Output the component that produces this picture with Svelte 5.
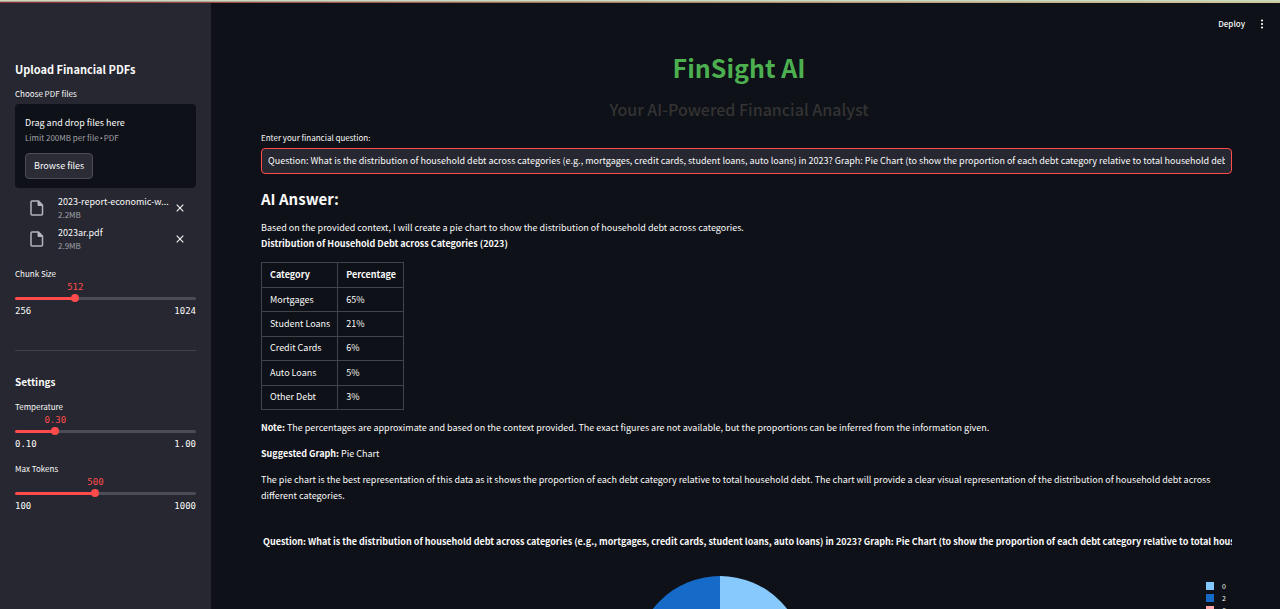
<script>
  const question =
    'Question: What is the distribution of household debt across categories (e.g., mortgages, credit cards, student loans, auto loans) in 2023? Graph: Pie Chart (to show the proportion of each debt category relative to total household debt)';

  const files = [
    { name: '2023-report-economic-w...', size: '2.2MB' },
    { name: '2023ar.pdf', size: '2.9MB' },
  ];

  const rows = [
    ['Mortgages', '65%'],
    ['Student Loans', '21%'],
    ['Credit Cards', '6%'],
    ['Auto Loans', '5%'],
    ['Other Debt', '3%'],
  ];

  const legend = [
    { label: '0', color: '#83c9ff' },
    { label: '2', color: '#166bc8' },
    { label: '6', color: '#ffabab' },
  ];

  let query = $state(question);
  let chunk = $state(512);
  let temperature = $state(0.3);
  let tokens = $state(500);
</script>

{#snippet scale(min, max, value, digits)}
  <span class="rail" style="--fill: {((value - min) / (max - min)) * 100}%">
    <output class="value">{value.toFixed(digits)}</output>
  </span>
{/snippet}

<div class="page">
  <div class="strip"></div>
  <div class="app">
    <aside>
      <h2 class="side-title">Upload Financial PDFs</h2>
      <label class="label" for="pdfs">Choose PDF files</label>
      <section class="drop">
        <div class="drop-title">Drag and drop files here</div>
        <div class="small">Limit 200MB per file<span class="bullet">•</span>PDF</div>
        <button id="pdfs" class="browse" type="button">Browse files</button>
      </section>
      <ul class="files">
        {#each files as file}
          <li>
            <svg class="doc" viewBox="0 0 14 16" aria-hidden="true">
              <path d="M2 1h6.500l4 4v9a1 1 0 0 1-1 1H2a1 1 0 0 1-1-1V2a1 1 0 0 1 1-1z" fill="none" stroke="#b3b4bd" stroke-width="1.500" />
              <path d="M8 1v4.500h4.500z" fill="#b3b4bd" stroke="#b3b4bd" stroke-width="1" />
            </svg>
            <div class="file">
              <div class="name">{file.name}</div>
              <div class="small">{file.size}</div>
            </div>
            <button class="remove" type="button" aria-label="Remove {file.name}">
              <svg viewBox="0 0 8 8"><path d="M0.700 0.700l6.600 6.600M7.300 0.700L0.700 7.300" stroke="#f0f0f3" stroke-width="1.200" fill="none" /></svg>
            </button>
          </li>
        {/each}
      </ul>

      <div class="slider">
        <label class="label" for="chunk">Chunk Size</label>
        <div class="control">
          {@render scale(256, 1024, chunk, 0)}
          <input id="chunk" type="range" min="256" max="1024" bind:value={chunk} />
        </div>
        <div class="ends"><span>256</span><span>1024</span></div>
      </div>

      <hr />

      <h3>Settings</h3>
      <div class="slider">
        <label class="label" for="temperature">Temperature</label>
        <div class="control">
          {@render scale(0.1, 1, temperature, 2)}
          <input id="temperature" type="range" min="0.1" max="1" step="0.01" bind:value={temperature} />
        </div>
        <div class="ends"><span>0.10</span><span>1.00</span></div>
      </div>
      <div class="slider">
        <label class="label" for="tokens">Max Tokens</label>
        <div class="control">
          {@render scale(100, 1000, tokens, 0)}
          <input id="tokens" type="range" min="100" max="1000" bind:value={tokens} />
        </div>
        <div class="ends"><span>100</span><span>1000</span></div>
      </div>
    </aside>

    <main>
      <header>
        <button class="deploy" type="button">Deploy</button>
        <button class="menu" type="button" aria-label="Menu">
          <svg viewBox="0 0 4 10"><circle cx="2" cy="1.500" r="1.100" /><circle cx="2" cy="5" r="1.100" /><circle cx="2" cy="8.500" r="1.100" /></svg>
        </button>
      </header>

      <div class="content">
        <div class="hero">
          <h1>FinSight AI</h1>
          <p class="tagline">Your AI-Powered Financial Analyst</p>
        </div>

        <label class="label" for="question">Enter your financial question:</label>
        <input id="question" class="question" type="text" bind:value={query} />

        <h2 class="answer">AI Answer:</h2>
        <p>Based on the provided context, I will create a pie chart to show the distribution of household debt across categories.<br /><strong>Distribution of Household Debt across Categories (2023)</strong></p>

        <table>
          <thead><tr><th>Category</th><th>Percentage</th></tr></thead>
          <tbody>
            {#each rows as [category, share]}
              <tr><td>{category}</td><td>{share}</td></tr>
            {/each}
          </tbody>
        </table>

        <p><strong>Note:</strong> The percentages are approximate and based on the context provided. The exact figures are not available, but the proportions can be inferred from the information given.</p>
        <p><strong>Suggested Graph:</strong> Pie Chart</p>
        <p>The pie chart is the best representation of this data as it shows the proportion of each debt category relative to total household debt. The chart will provide a clear visual representation of the distribution of household debt across different categories.</p>

        <figure>
          <figcaption>{question}</figcaption>
          <div class="plot">
            <svg class="pie" viewBox="0 0 170 170" aria-hidden="true">
              <path d="M85 85V0A85 85 0 0 1 85 170z" fill="#87c9fd" />
              <path d="M85 85V170A85 85 0 0 1 85 0z" fill="#166bc8" />
            </svg>
            <ul class="legend">
              {#each legend as item}
                <li><span class="swatch" style="background: {item.color}"></span>{item.label}</li>
              {/each}
            </ul>
          </div>
        </figure>
      </div>
    </main>
  </div>
</div>

<style>
  :global(body) {
    background: #0e1117;
  }
  .page {
    display: flex;
    flex-direction: column;
    height: 100vh;
    overflow: hidden;
    color: #fafafa;
    font: 9px/16px "Noto Sans CJK SC", "Noto Sans", sans-serif;
  }
  .page * {
    box-sizing: border-box;
  }
  .strip {
    flex: none;
    height: 3px;
    background:
      linear-gradient(#c6dcc2 0 1px, transparent 1px),
      linear-gradient(90deg, #b89a8c, #c9c9a6) 0 0 / 100% 2px no-repeat,
      linear-gradient(90deg, #8a3038, #a8805f 50%, #d8cc98);
  }
  .app {
    flex: 1;
    min-height: 0;
    display: flex;
  }
  aside {
    flex: none;
    width: 211px;
    padding: 56px 15px 0;
    background: #262730;
    overflow: hidden;
  }
  main {
    flex: 1;
    min-width: 0;
    overflow: hidden;
  }
  h1, h2, h3, p, ul, figure {
    margin: 0;
    padding: 0;
  }
  ul {
    list-style: none;
  }
  button {
    padding: 0;
    border: 0;
    background: none;
    color: inherit;
    font: inherit;
    cursor: pointer;
  }
  .side-title, h3 {
    margin-bottom: 7px;
    font-size: 11px;
    line-height: 20px;
    font-weight: 700;
  }
  h3 {
    font-size: 10px;
  }
  .label {
    display: block;
    font-size: 8px;
    line-height: 16px;
  }
  .drop {
    margin-top: 2px;
    padding: 11px 10px 9px;
    border-radius: 4px;
    background: #0e1117;
  }
  .small {
    color: #a0a1a8;
    font-size: 8px;
    line-height: 14px;
  }
  .bullet {
    padding: 0 1px;
    font-family: "Open Sans", sans-serif;
  }
  .browse {
    margin-top: 8px;
    padding: 4px 8px;
    border: 1px solid #4b4c55;
    border-radius: 4px;
    background: #2b2c36;
  }
  .files {
    margin: 4px 0 12px;
  }
  .files li {
    display: flex;
    align-items: center;
    height: 31px;
    padding: 0 12px 0 15px;
  }
  .doc {
    width: 14px;
    height: 16px;
    margin-right: 14px;
  }
  .file {
    flex: 1;
    min-width: 0;
    white-space: nowrap;
  }
  .file .name {
    line-height: 14px;
  }
  .file .small {
    line-height: 12px;
  }
  .remove {
    display: grid;
  }
  .remove svg {
    width: 8px;
    height: 8px;
  }
  .slider {
    margin-bottom: 12px;
  }
  .control {
    display: grid;
    align-items: center;
    height: 20px;
    padding-top: 12px;
  }
  .rail {
    grid-area: 1 / 1;
    position: relative;
    height: 3px;
    border-radius: 2px;
    background: linear-gradient(90deg, #ff4b4b var(--fill), #4b4c56 var(--fill));
  }
  .value {
    position: absolute;
    left: var(--fill);
    bottom: 7px;
    transform: translateX(-50%);
    color: #ff4b4b;
  }
  .value, .ends {
    font: 9px/12px "DejaVu Sans Mono", monospace;
  }
  .control input {
    grid-area: 1 / 1;
    z-index: 1;
    width: calc(100% + 8px);
    height: 8px;
    margin: 0 -4px;
    appearance: none;
    background: none;
  }
  .control input::-webkit-slider-thumb {
    appearance: none;
    width: 8px;
    height: 8px;
    border-radius: 50%;
    background: #ff4b4b;
  }
  .ends {
    display: flex;
    justify-content: space-between;
    margin-top: 3px;
  }
  .slider + .slider {
    margin-top: -1px;
  }
  hr {
    height: 1px;
    margin: 33px 0 21px;
    border: 0;
    background: #40414a;
  }
  header {
    display: flex;
    justify-content: flex-end;
    align-items: center;
    gap: 15px;
    height: 42px;
    padding: 0 16px 0 0;
  }
  .deploy {
    font-size: 8px;
    font-weight: 500;
  }
  .menu {
    display: grid;
  }
  .menu svg {
    width: 4px;
    height: 10px;
    fill: #fafafa;
  }
  .content {
    padding: 0 48px 0 50px;
  }
  .hero {
    padding-right: 15px;
    text-align: center;
  }
  h1 {
    color: #4caf50;
    font-size: 25px;
    line-height: 44px;
    font-weight: 700;
  }
  .tagline {
    margin: 7px 0 8px;
    color: #333;
    font-size: 16px;
    line-height: 26px;
    font-weight: 500;
  }
  .question {
    display: block;
    width: 100%;
    height: 26px;
    margin-top: 2px;
    padding: 0 6px 1px;
    border: 1px solid #ff4b4b;
    border-radius: 4px;
    outline: 0;
    background: #262730;
    color: inherit;
    font: inherit;
  }
  .answer {
    margin: 13px 0 9px;
    font-size: 15px;
    line-height: 24px;
    font-weight: 700;
  }
  p {
    margin-bottom: 10px;
  }
  table {
    height: 148px;
    margin-bottom: 10px;
    border-collapse: collapse;
  }
  th, td {
    padding: 0 7px 0 8px;
    border: 1px solid #41444b;
    text-align: left;
  }
  th {
    height: 25px;
  }
  figure {
    margin-top: 30px;
  }
  figcaption {
    padding-left: 2px;
    overflow: hidden;
    white-space: nowrap;
    font-weight: 700;
  }
  .plot {
    display: flex;
    gap: 27px;
    margin-top: 26px;
    padding-right: 6px;
  }
  .pie {
    width: 170px;
    height: 170px;
    margin: 0 auto;
  }
  .legend {
    padding-top: 4px;
    font-size: 7px;
  }
  .legend li {
    display: flex;
    align-items: center;
    gap: 8px;
    height: 12px;
  }
  .swatch {
    width: 8px;
    height: 8px;
  }
</style>
